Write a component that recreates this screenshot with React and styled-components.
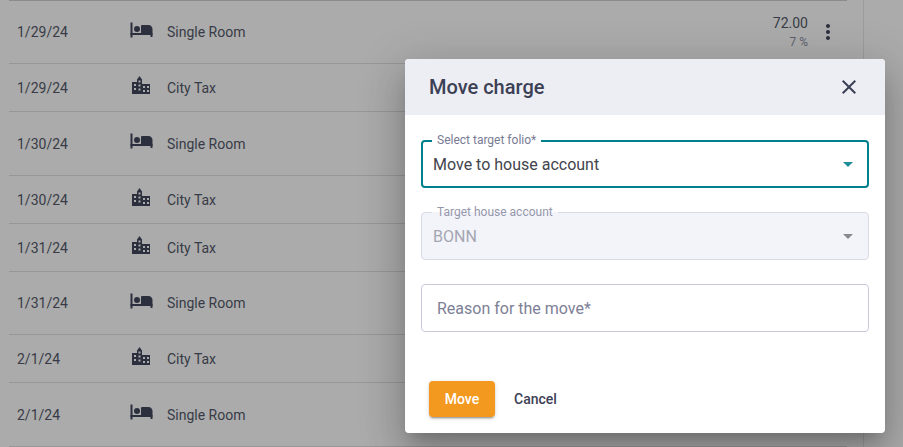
import React from 'react';
import styled, { createGlobalStyle } from 'styled-components';
import { MdClose, MdMoreVert, MdArrowDropDown } from 'react-icons/md';

const GlobalStyle = createGlobalStyle`
  html, body {
    margin: 0;
    padding: 0;
    height: 100%;
    overflow: hidden;
    background: #ababab;
    font-family: Roboto, "Liberation Sans", sans-serif;
  }
`;

const Page = styled.div`
  position: relative;
  width: 903px;
  height: 447px;
  overflow: hidden;
  background: #ababab;
`;

const Content = styled.div`
  width: 864px;
  height: 447px;
  padding-left: 9px;
  box-sizing: border-box;
  border-right: 1px solid #9c9c9c;
`;

const Table = styled.div`
  width: 838px;
  border-top: 1px solid #8b8b8c;
  margin-top: 0;
`;

const Row = styled.div`
  display: flex;
  align-items: center;
  height: ${props => props.$height}px;
  box-sizing: border-box;
  border-bottom: 1px solid #979798;
  font-size: 14px;
  color: #383b47;
`;

const DateCell = styled.div`
  width: 118px;
  padding-left: 8px;
  box-sizing: border-box;
`;

const IconCell = styled.div`
  width: 40px;
  display: flex;
  justify-content: center;
  margin-top: -5px;
  transform: translateX(-6px);
`;

const NameCell = styled.div`
  flex: 1;
`;

const AmountCell = styled.div`
  display: flex;
  flex-direction: column;
  align-items: flex-end;
  line-height: 20px;
`;

const Percent = styled.span`
  font-size: 12px;
  line-height: 18px;
  color: #5d606c;
`;

const MenuCell = styled.div`
  width: 39px;
  display: flex;
  justify-content: center;
  font-size: 24px;
  color: #2c2f3c;
`;

const Modal = styled.div`
  position: absolute;
  left: 405px;
  top: 59px;
  width: 480px;
  height: 374px;
  display: flex;
  flex-direction: column;
  background: #fff;
  border-radius: 4px;
  overflow: hidden;
`;

const ModalShadow = styled.div`
  position: absolute;
  left: 405px;
  top: 59px;
  width: 480px;
  height: 374px;
  border-radius: 4px;
  box-shadow: 0 11px 15px -7px rgba(0, 0, 0, .2), 0 24px 38px 3px rgba(0, 0, 0, .14), 0 9px 46px 8px rgba(0, 0, 0, .12);
`;

const ModalHeader = styled.div`
  height: 56px;
  flex: none;
  display: flex;
  align-items: center;
  justify-content: space-between;
  padding: 0 24px;
  background: #edeef4;
`;

const ModalTitle = styled.h2`
  margin: 0;
  font-size: 20px;
  font-weight: 500;
  color: #3c4055;
`;

const CloseIcon = styled(MdClose)`
  font-size: 24px;
  color: #3c4055;
`;

const ModalBody = styled.div`
  flex: 1;
  display: flex;
  flex-direction: column;
  gap: 24px;
  padding: 25px 16px 0;
`;

const Field = styled.div`
  position: relative;
  height: 48px;
  box-sizing: border-box;
  display: flex;
  align-items: center;
  justify-content: space-between;
  padding: 0 ${props => (props.$focused ? 10 : 11)}px 0 ${props => (props.$focused ? 10 : 11)}px;
  border-radius: 4px;
  border: ${props => (props.$focused ? '2px solid #007f8c' : '1px solid #c7c9da')};
  background: ${props => (props.$disabled ? '#f3f4f9' : '#fff')};
  border-color: ${props => (props.$disabled ? '#d9dae6' : props.$focused ? '#007f8c' : '#c7c9da')};
  font-size: 16px;
  color: ${props => (props.$disabled ? '#a4a6b2' : '#43444d')};
`;

const FloatLabel = styled.label`
  position: absolute;
  left: ${props => (props.$focused ? 9 : 10)}px;
  top: ${props => (props.$focused ? -9 : -8)}px;
  padding: 0 5px;
  font-size: 12px;
  line-height: 14px;
  color: ${props => (props.$disabled ? '#9597ac' : '#787b94')};
  background: ${props => (props.$disabled ? 'linear-gradient(#fff 50%, #f3f4f9 50%)' : '#fff')};
`;

const Placeholder = styled.span`
  padding-left: 4px;
  color: #7d8096;
`;

const Caret = styled(MdArrowDropDown)`
  font-size: 24px;
  margin-right: -3px;
  color: ${props => (props.$disabled ? '#8a8a8e' : '#1f8d99')};
`;

const ModalFooter = styled.div`
  display: flex;
  align-items: center;
  gap: 3px;
  padding: 0 24px 16px;
`;

const PrimaryButton = styled.button`
  width: 66px;
  height: 36px;
  border: none;
  border-radius: 4px;
  background: #f39920;
  color: #fff;
  font: 500 14px Roboto, sans-serif;
  box-shadow: 0 3px 1px -2px rgba(0, 0, 0, .2), 0 2px 2px rgba(0, 0, 0, .14), 0 1px 5px rgba(0, 0, 0, .12);
`;

const TextButton = styled.button`
  height: 36px;
  padding: 0 16px;
  border: none;
  background: none;
  color: #3c4055;
  font: 500 14px Roboto, sans-serif;
`;

const BedIcon = () => (
  <svg width="23" height="16" viewBox="0 0 23 16" fill="#2c2f3e">
    <rect x="0.5" y="0.5" width="2" height="15" />
    <rect x="0.5" y="11" width="22" height="2" />
    <circle cx="7" cy="7" r="3" />
    <path d="M11 4.2c0-.7.5-1.2 1.200-1.200h6.300c2.300 0 4 1.800 4 4v8h-2v-4H11z" />
  </svg>
);

const CityIcon = () => (
  <svg width="18" height="18" viewBox="0 0 18 18">
    <path
      fill="#2c2f3e"
      fillRule="evenodd"
      d="M0 6h5V3.500L7.500 0 10 3.500V8h8v10H0zM2 8v2h2V8zM2 12v2h2v-2zM6.500 4.500v2h2v-2zM6.500 8.500v2h2v-2zM6.500 12.500v2h2v-2zM11 10v2h2v-2zM15 10v2h2v-2zM11 14v2h2v-2zM15 14v2h2v-2z"
    />
  </svg>
);

const rows = [
  { date: '1/29/24', type: 'room', height: 63, amount: '72.00', percent: '7 %' },
  { date: '1/29/24', type: 'tax', height: 48 },
  { date: '1/30/24', type: 'room', height: 64 },
  { date: '1/30/24', type: 'tax', height: 48 },
  { date: '1/31/24', type: 'tax', height: 48 },
  { date: '1/31/24', type: 'room', height: 63 },
  { date: '2/1/24', type: 'tax', height: 48 },
  { date: '2/1/24', type: 'room', height: 64 },
];

export default function App() {
  return (
    <Page>
      <GlobalStyle />
      <Content>
        <Table>
          {rows.map((row, i) => (
            <Row key={i} $height={row.height}>
              <DateCell>{row.date}</DateCell>
              <IconCell>{row.type === 'room' ? <BedIcon /> : <CityIcon />}</IconCell>
              <NameCell>{row.type === 'room' ? 'Single Room' : 'City Tax'}</NameCell>
              {row.amount && (
                <>
                  <AmountCell>
                    {row.amount}
                    <Percent>{row.percent}</Percent>
                  </AmountCell>
                  <MenuCell><MdMoreVert /></MenuCell>
                </>
              )}
            </Row>
          ))}
        </Table>
      </Content>
      <ModalShadow />
      <Modal>
        <ModalHeader>
          <ModalTitle>Move charge</ModalTitle>
          <CloseIcon />
        </ModalHeader>
        <ModalBody>
          <Field $focused>
            <FloatLabel $focused>Select target folio*</FloatLabel>
            Move to house account
            <Caret />
          </Field>
          <Field $disabled>
            <FloatLabel $disabled>Target house account</FloatLabel>
            BONN
            <Caret $disabled />
          </Field>
          <Field>
            <Placeholder>Reason for the move*</Placeholder>
          </Field>
        </ModalBody>
        <ModalFooter>
          <PrimaryButton>Move</PrimaryButton>
          <TextButton>Cancel</TextButton>
        </ModalFooter>
      </Modal>
    </Page>
  );
}
